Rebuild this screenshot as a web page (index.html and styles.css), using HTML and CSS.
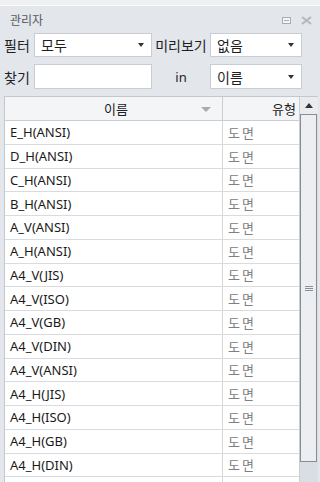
FILE: index.html
```html
<!DOCTYPE html>
<html lang="ko">
<head>
  <meta charset="UTF-8" />
  <title>관리자</title>
  <link rel="stylesheet" href="styles.css">
</head>
<body>
  <div class="panel">
    <div class="top-strip"></div>

    <!-- 제목줄 -->
    <div class="title-bar">
      <span class="title">관리자</span>
      <span class="title-icons">
        <svg width="9" height="7" viewBox="0 0 9 7"><rect x="0.5" y="0.5" width="8" height="6" fill="#f4f5f7" stroke="#a9adb5"/><line x1="2" y1="3.5" x2="7" y2="3.5" stroke="#a9adb5"/></svg>
        <svg width="11" height="9" viewBox="0 0 11 9"><path d="M1 1 L10 8 M10 1 L1 8" stroke="#b4b8bf" stroke-width="2.2" fill="none"/></svg>
      </span>
    </div>

    <!-- 필터 -->
    <div class="filters">
      <span class="label">필터</span>
      <div class="select"><span>모두</span><i class="caret"></i></div>
      <span class="label center">미리보기</span>
      <div class="select"><span>없음</span><i class="caret"></i></div>

      <span class="label">찾기</span>
      <div class="input"></div>
      <span class="label center in">in</span>
      <div class="select"><span>이름</span><i class="caret"></i></div>
    </div>

    <!-- 목록 -->
    <div class="grid-wrap">
      <div class="grid">
        <div class="row head">
          <div class="col-name">이름<i class="sort"></i></div>
          <div class="col-type">유형</div>
        </div>
        <div id="rows"></div>
      </div>
      <div class="scrollbar">
        <div class="sb-up"><i></i></div>
        <div class="sb-thumb"><span class="grip"></span></div>
        <div class="sb-rest"></div>
      </div>
    </div>
  </div>

  <script>
    const names = [
      'E_H(ANSI)', 'D_H(ANSI)', 'C_H(ANSI)', 'B_H(ANSI)', 'A_V(ANSI)', 'A_H(ANSI)',
      'A4_V(JIS)', 'A4_V(ISO)', 'A4_V(GB)', 'A4_V(DIN)', 'A4_V(ANSI)',
      'A4_H(JIS)', 'A4_H(ISO)', 'A4_H(GB)', 'A4_H(DIN)', ''
    ];

    const rows = document.querySelector('#rows');
    names.forEach(name => {
      const row = document.createElement('div');
      row.className = 'row';
      row.innerHTML = '<div class="col-name"></div><div class="col-type"></div>';
      row.children[0].textContent = name;
      row.children[1].textContent = name ? '도면' : '';
      rows.appendChild(row);
    });
  </script>
</body>
</html>
```

FILE: styles.css
```css
body {
  margin: 0;
  font-family: "Noto Sans", "Noto Sans CJK KR", sans-serif;
}
.panel {
  width: 320px;
  height: 482px;
  background: #e3e6eb;
  overflow: hidden;
}
.top-strip {
  height: 5px;
  background: #f0f1f3;
  border-bottom: 1px solid #fbfbfc;
}

/* 제목줄 */
.title-bar {
  height: 25px;
  display: flex;
  align-items: center;
  justify-content: space-between;
  padding: 0 8px 0 10px;
}
.title {
  font-size: 12px;
  color: #555a62;
  margin-top: 2px;
}
.title-icons {
  display: flex;
  align-items: center;
  gap: 10px;
  margin-top: 4px;
}

/* 필터 */
.filters {
  display: grid;
  grid-template-columns: 34px 118px 58px 92px;
  grid-template-rows: 24px 25px;
  row-gap: 7px;
  margin-top: 2px;
}
.label {
  font-size: 14px;
  color: #1e1e1e;
  display: flex;
  align-items: center;
  padding-left: 4px;
}
.label.center {
  justify-content: center;
  padding-left: 0;
}
.label.in {
  font-size: 13px;
}
.select,
.input {
  background: #fff;
  border: 1px solid #c8ccd3;
  box-sizing: border-box;
  display: flex;
  align-items: center;
  justify-content: space-between;
  padding: 0 7px 0 6px;
  font-size: 14px;
  color: #1e1e1e;
}
.caret {
  width: 0;
  height: 0;
  border-left: 3px solid transparent;
  border-right: 3px solid transparent;
  border-top: 4px solid #333;
}

/* 목록 */
.grid-wrap {
  display: flex;
  margin: 7px 2px 0 4px;
  height: 400px;
  border-left: 1px solid #c3c7ce;
  border-top: 1px solid #c3c7ce;
}
.grid {
  flex: 1;
  background: #fff;
}
.row {
  display: flex;
  height: 23.75px;
  box-sizing: border-box;
  border-bottom: 1px solid #d8dbe1;
  font-size: 13px;
}
.row.head {
  height: 24px;
  background: #f4f5f7;
  border-bottom: 1px solid #c9cdd4;
}
.col-name {
  width: 218px;
  box-sizing: border-box;
  border-right: 1px solid #d3d6dc;
  padding-left: 5px;
  display: flex;
  align-items: center;
  color: #1a1a1a;
}
.col-type {
  flex: 1;
  padding-left: 5px;
  display: flex;
  align-items: center;
  color: #808080;
  letter-spacing: 2px;
}
.head .col-name {
  justify-content: center;
  position: relative;
  color: #222;
  border-right-color: #c9cdd4;
}
.head .col-type {
  justify-content: flex-end;
  padding-right: 3px;
  color: #222;
  letter-spacing: 0;
}
.sort {
  position: absolute;
  right: 11px;
  top: 10px;
  border-left: 5px solid transparent;
  border-right: 5px solid transparent;
  border-top: 5px solid #a7abb2;
}

/* 스크롤바 */
.scrollbar {
  width: 18px;
  display: flex;
  flex-direction: column;
  background: #d9dde4;
  border-left: 1px solid #c9cdd4;
}
.sb-up {
  height: 17px;
  background: #e9ebef;
  display: flex;
  align-items: center;
  justify-content: center;
}
.sb-up i {
  border-left: 4px solid transparent;
  border-right: 4px solid transparent;
  border-bottom: 5px solid #333;
}
.sb-thumb {
  height: 348px;
  margin: 0 1px 0 0;
  box-sizing: border-box;
  border: 1px solid #868b94;
  background: #eceef2;
  display: flex;
  align-items: center;
  justify-content: center;
}
.grip {
  width: 8px;
  height: 5px;
  border-top: 1px solid #8a8f98;
  border-bottom: 1px solid #8a8f98;
  box-sizing: border-box;
  background: linear-gradient(#8a8f98, #8a8f98) center / 100% 1px no-repeat;
}
.sb-rest {
  flex: 1;
}
```
